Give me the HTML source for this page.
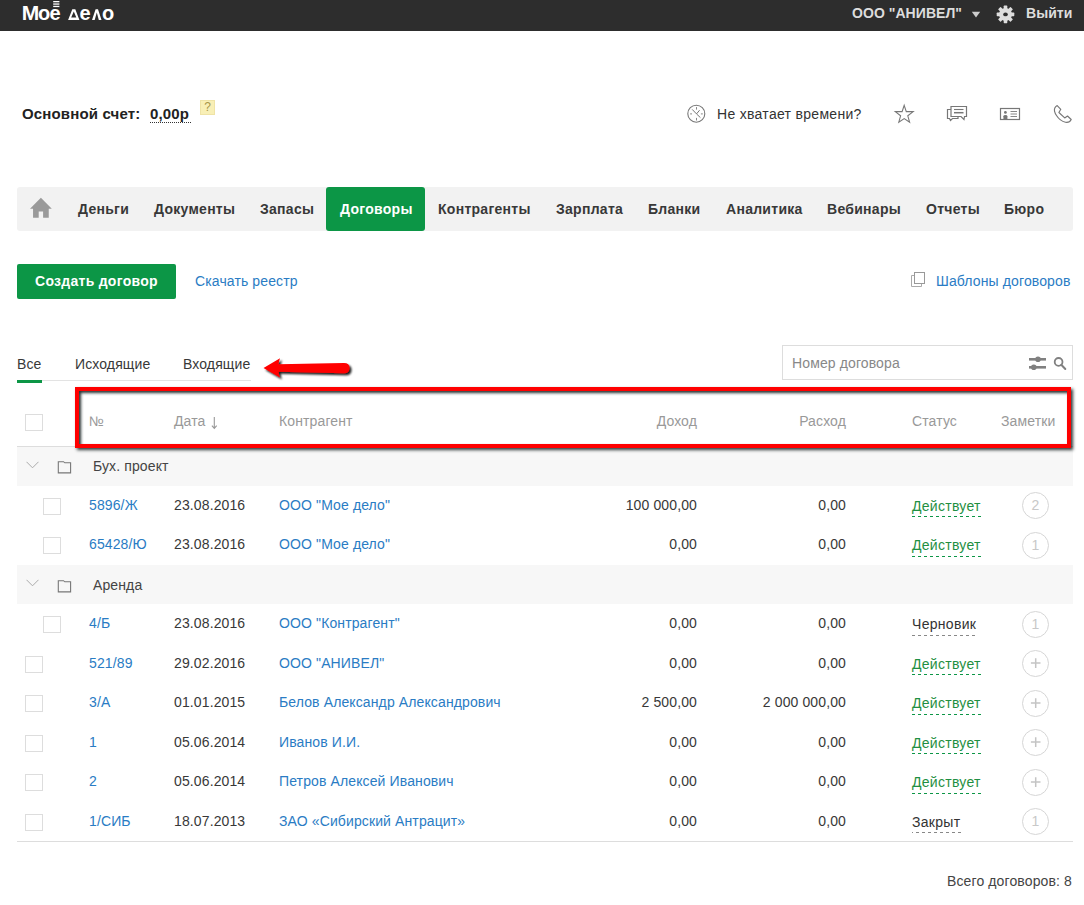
<!DOCTYPE html>
<html><head><meta charset="utf-8">
<style>
*{margin:0;padding:0;box-sizing:border-box}
html,body{width:1084px;height:905px;overflow:hidden;background:#fff}
body{position:relative;font-family:"Liberation Sans",sans-serif;font-size:14px;color:#383838}
.a{position:absolute;white-space:nowrap;line-height:16px;letter-spacing:0.12px}
.b{font-weight:bold;letter-spacing:0.28px}
.hdr{position:absolute;left:0;top:0;width:1084px;height:31px;background:#2d2d2d}
.nav{position:absolute;left:17px;top:187px;width:1056px;height:44px;background:#f2f2f2;border-radius:3px}
.navact{position:absolute;left:326px;top:187px;width:99px;height:44px;background:#0c9646;border-radius:3px}
.lnk{color:#2a7cc4}
.gr{color:#999}
.cb{position:absolute;width:18px;height:17px;border:1px solid #ddd;background:#fff}
.grp{position:absolute;left:17px;width:1056px;background:#f7f7f7}
.num{text-align:right}
.st{position:absolute;white-space:nowrap;line-height:16px;color:#1f8f42;letter-spacing:0.28px}
.dash{position:absolute;height:1px;background-image:linear-gradient(90deg,#0c9646 0 3px,transparent 3px 6px);background-size:6px 1px}
.dashg{position:absolute;height:1px;background-image:linear-gradient(90deg,#888 0 3px,transparent 3px 6px);background-size:6px 1px}
.circ{position:absolute;width:27px;height:27px;border:1px solid #d6d6d6;border-radius:50%;color:#c8c8c8;font-size:14px;line-height:25px;text-align:center;letter-spacing:0}
</style></head><body>

<div class="hdr"></div>
<div class="a b" style="left:21.8px;top:1px;font-size:21px;line-height:24px;color:#fff;letter-spacing:0">М</div>
<div class="a b" style="left:38px;top:2px;font-size:20px;line-height:22px;color:#fff;letter-spacing:0">о</div>
<div class="a b" style="left:49.6px;top:2px;font-size:20px;line-height:22px;color:#fff;letter-spacing:0">е</div>
<svg style="position:absolute;left:0;top:0" width="120" height="30" viewBox="0 0 120 30"><g fill="#fff"><rect x="53.2" y="1" width="6.2" height="1.3"/><rect x="53.2" y="3.4" width="6.2" height="1.3"/><rect x="53.2" y="5.8" width="6.2" height="1.3"/><path fill-rule="evenodd" d="M68.1 19.9L72.3 9.2H75.3L79.4 19.9ZM71.2 17.5H76.3L73.8 11.4Z"/><path d="M92 19.9L95.6 9.2H98L101.5 19.9H98.8L96.8 12.6L94.7 19.9Z"/></g></svg>
<div class="a b" style="left:79.6px;top:2px;font-size:20px;line-height:22px;color:#fff;letter-spacing:0">е</div>
<div class="a b" style="left:101.9px;top:2px;font-size:20px;line-height:22px;color:#fff;letter-spacing:0">о</div>
<div class="a b" style="left:852px;top:5px;color:#ddd;letter-spacing:0.05px">ООО "АНИВЕЛ"</div>
<svg style="position:absolute;left:971px;top:11px" width="10" height="8" viewBox="0 0 10 8"><path d="M0.8 0.8H9.2L5 6.6Z" fill="#ccc"/></svg>
<svg style="position:absolute;left:995px;top:4px" width="22" height="22" viewBox="995 4 22 22"><g fill="#ddd" transform="translate(1005.5 14.4)"><circle r="6.4"/><rect x="-1.8" y="-8.8" width="3.6" height="17.6" rx="0.6"/><rect x="-1.8" y="-8.8" width="3.6" height="17.6" rx="0.6" transform="rotate(45)"/><rect x="-1.8" y="-8.8" width="3.6" height="17.6" rx="0.6" transform="rotate(90)"/><rect x="-1.8" y="-8.8" width="3.6" height="17.6" rx="0.6" transform="rotate(135)"/><ellipse rx="2.3" ry="1.9" fill="#2d2d2d"/></g></svg>
<div class="a b" style="left:1026px;top:5px;color:#ddd;letter-spacing:0.05px">Выйти</div>

<div class="a b" style="left:22px;top:105px;font-size:15px;line-height:17px;color:#222;letter-spacing:0.15px">Основной счет:</div>
<div class="a b" style="left:150px;top:105px;font-size:15px;line-height:17px;color:#222;letter-spacing:0.15px">0,00р</div>
<div style="position:absolute;left:150px;top:122px;width:41px;height:1px;background-image:linear-gradient(90deg,#333 0 1px,transparent 1px 2px);background-size:2px 1px"></div>
<div style="position:absolute;left:200px;top:100px;width:15px;height:15px;background:#f8efb6;border:1px solid #efe3a6;color:#a8964a;font-size:12px;line-height:13px;text-align:center">?</div>

<svg style="position:absolute;left:684px;top:102px" width="26" height="26" viewBox="684 102 26 26"><circle cx="696.3" cy="113.7" r="8.5" fill="none" stroke="#777" stroke-width="1.1"/><path d="M692.2 109.4L696.5 113.9L699.6 110.2M696.5 113.9L700.4 117.6" fill="none" stroke="#777" stroke-width="1"/><path d="M696.5 107.1v2.5M696.5 117.9v2.6M690.1 113.9h1.9M700.9 113.9h1.9" stroke="#888" stroke-width="1"/></svg>
<div class="a" style="left:717px;top:106px;color:#333;letter-spacing:0.3px">Не хватает времени?</div>
<svg style="position:absolute;left:890px;top:100px" width="30" height="28" viewBox="890 100 30 28"><path d="M904.2 105.3L906.3 111.6L913.2 111.6L907.8 115.8L909.6 122.2L904.2 118.6L898.8 122.2L900.6 115.8L895.3 111.6L902.1 111.6Z" fill="none" stroke="#777" stroke-width="1.1" stroke-linejoin="miter"/></svg>
<svg style="position:absolute;left:946px;top:105px" width="22" height="17" viewBox="0 0 22 17"><path d="M5 1.5H20.5V11.5H18.5L18 14.5L15 11.5H5Z" fill="none" stroke="#777" stroke-width="1.2"/><path d="M8 4.5H17.5" stroke="#777" stroke-width="1.1"/><path d="M8 7.7H17.5" stroke="#777" stroke-width="1.5"/><path d="M5 4.5H1.5V13.5H3.5L4.5 15.5L6.5 13.5H12V11.5" fill="none" stroke="#777" stroke-width="1.2"/></svg>
<svg style="position:absolute;left:999px;top:107px" width="22" height="14" viewBox="0 0 22 14"><rect x="1.5" y="1.5" width="19" height="11" fill="none" stroke="#777" stroke-width="1.2"/><circle cx="6.4" cy="5.4" r="1.4" fill="#777"/><path d="M4.4 12.5V9.2Q4.4 8 6.4 8Q8.4 8 8.4 9.2V12.5Z" fill="#777"/><path d="M11.5 4.5H18M11.5 7H18M11.5 9.5H18" stroke="#888" stroke-width="1"/></svg>
<svg style="position:absolute;left:1050px;top:100px" width="28" height="26" viewBox="1050 100 28 26"><path d="M1057.2 105.6L1060.8 109.3L1058.9 112.5L1064.7 117.9L1067.5 116L1071.2 119.5Q1069.5 123 1065.5 122.3Q1060 121 1056.5 115.5Q1053.5 111 1054.8 108Q1055.5 106.5 1057.2 105.6Z" fill="none" stroke="#777" stroke-width="1.15" stroke-linejoin="round"/></svg>

<div class="nav"></div>
<div class="navact"></div>
<svg style="position:absolute;left:26px;top:193px" width="30" height="29" viewBox="26 193 30 29"><path d="M40.9 197.8L51.8 208.7H48.75V217.8H43.1V211.6H38.7V217.8H33.05V208.7H30Z" fill="#9a9a9a"/></svg>
<div class="a b" style="left:78px;top:201px">Деньги</div>
<div class="a b" style="left:154px;top:201px">Документы</div>
<div class="a b" style="left:260px;top:201px">Запасы</div>
<div class="a b" style="left:340px;top:201px;color:#fff">Договоры</div>
<div class="a b" style="left:438px;top:201px">Контрагенты</div>
<div class="a b" style="left:556px;top:201px">Зарплата</div>
<div class="a b" style="left:648px;top:201px">Бланки</div>
<div class="a b" style="left:726px;top:201px">Аналитика</div>
<div class="a b" style="left:827px;top:201px">Вебинары</div>
<div class="a b" style="left:926px;top:201px">Отчеты</div>
<div class="a b" style="left:1004px;top:201px">Бюро</div>

<div style="position:absolute;left:17px;top:264px;width:159px;height:35px;background:#0c9646;border-radius:2px"></div>
<div class="a b" style="left:35px;top:273px;color:#fff">Создать договор</div>
<div class="a lnk" style="left:195px;top:273px">Скачать реестр</div>
<svg style="position:absolute;left:911px;top:272px" width="15" height="16" viewBox="0 0 15 16"><path d="M3.5 3.5H0.5V14.5H10.5V11.5" fill="none" stroke="#aaa" stroke-width="1"/><rect x="3.5" y="0.5" width="10" height="11" fill="#fff" stroke="#999" stroke-width="1"/></svg>
<div class="a lnk" style="left:936px;top:273px">Шаблоны договоров</div>

<div class="a" style="left:17px;top:356px">Все</div>
<div class="a" style="left:75px;top:356px">Исходящие</div>
<div class="a" style="left:183px;top:356px">Входящие</div>
<div style="position:absolute;left:17px;top:380px;width:234px;height:1px;background:#e3e3e3"></div>
<div style="position:absolute;left:17px;top:380px;width:25px;height:3px;background:#0c9646"></div>

<div style="position:absolute;left:782px;top:345px;width:291px;height:35px;border:1px solid #ddd"></div>
<div class="a" style="left:792px;top:355px;color:#888">Номер договора</div>
<svg style="position:absolute;left:1028px;top:356px" width="19" height="15" viewBox="0 0 19 15"><g fill="#808080"><rect x="1" y="2" width="17" height="2.6"/><rect x="1" y="10" width="17" height="2.6"/><circle cx="10" cy="3.3" r="2.8"/><circle cx="5.8" cy="11.3" r="2.8"/></g></svg>
<svg style="position:absolute;left:1052px;top:355px" width="16" height="16" viewBox="0 0 16 16"><circle cx="6.6" cy="6.9" r="3.9" fill="none" stroke="#808080" stroke-width="1.8"/><path d="M9.3 9.8L13.3 14" stroke="#808080" stroke-width="2" stroke-linecap="round"/></svg>

<!-- table header -->
<div class="cb" style="left:25px;top:414px"></div>
<div class="a gr" style="left:89px;top:413px">№</div>
<div class="a gr" style="left:174px;top:413px">Дата</div>
<svg style="position:absolute;left:210px;top:415px" width="9" height="16" viewBox="210 415 9 16"><path d="M214.3 417V428.3M211.9 425.6L214.3 428.4L216.7 425.6" fill="none" stroke="#999" stroke-width="1.1"/></svg>
<div class="a gr" style="left:279px;top:413px">Контрагент</div>
<div class="a gr num" style="left:597px;top:413px;width:100px">Доход</div>
<div class="a gr num" style="left:746px;top:413px;width:100px">Расход</div>
<div class="a gr" style="left:912px;top:413px">Статус</div>
<div class="a gr" style="left:1001px;top:413px">Заметки</div>
<div style="position:absolute;left:17px;top:446px;width:1056px;height:1px;background:#ddd"></div>

<!-- rows -->
<!--ROWS-->
<div class="grp" style="top:447px;height:39px"></div>
<svg style="position:absolute;left:25.6px;top:460.5px" width="13" height="8" viewBox="0 0 13 8"><path d="M0.5 0.8L6.5 6.8L12.5 0.8" fill="none" stroke="#aaa" stroke-width="1"/></svg>
<svg style="position:absolute;left:57px;top:460.0px" width="15" height="14" viewBox="0 0 15 14"><path d="M1.3 1.7H6.5L7.8 2.8H13.6V12.9H1.3Z" fill="none" stroke="#777" stroke-width="1.1"/></svg>
<div class="a" style="left:93px;top:458.2px;color:#444">Бух. проект</div>
<div class="cb" style="left:43px;top:497.8px"></div>
<div class="a lnk" style="left:89px;top:496.5px">5896/Ж</div>
<div class="a" style="left:174px;top:496.5px">23.08.2016</div>
<div class="a lnk" style="left:279px;top:496.5px">ООО "Мое дело"</div>
<div class="a num" style="left:497px;top:496.5px;width:200px">100 000,00</div>
<div class="a num" style="left:646px;top:496.5px;width:200px">0,00</div>
<div class="st" style="left:912px;top:497.5px">Действует</div>
<div class="dash" style="left:912px;top:516.0px;width:69px"></div>
<div class="circ" style="left:1022px;top:492.1px">2</div>
<div class="cb" style="left:43px;top:537.3px"></div>
<div class="a lnk" style="left:89px;top:536.0px">65428/Ю</div>
<div class="a" style="left:174px;top:536.0px">23.08.2016</div>
<div class="a lnk" style="left:279px;top:536.0px">ООО "Мое дело"</div>
<div class="a num" style="left:497px;top:536.0px;width:200px">0,00</div>
<div class="a num" style="left:646px;top:536.0px;width:200px">0,00</div>
<div class="st" style="left:912px;top:537.0px">Действует</div>
<div class="dash" style="left:912px;top:555.5px;width:69px"></div>
<div class="circ" style="left:1022px;top:531.6px">1</div>
<div class="grp" style="top:565px;height:39px"></div>
<svg style="position:absolute;left:25.6px;top:579.0px" width="13" height="8" viewBox="0 0 13 8"><path d="M0.5 0.8L6.5 6.8L12.5 0.8" fill="none" stroke="#aaa" stroke-width="1"/></svg>
<svg style="position:absolute;left:57px;top:578.5px" width="15" height="14" viewBox="0 0 15 14"><path d="M1.3 1.7H6.5L7.8 2.8H13.6V12.9H1.3Z" fill="none" stroke="#777" stroke-width="1.1"/></svg>
<div class="a" style="left:93px;top:576.7px;color:#444">Аренда</div>
<div class="cb" style="left:43px;top:616.3px"></div>
<div class="a lnk" style="left:89px;top:615.0px">4/Б</div>
<div class="a" style="left:174px;top:615.0px">23.08.2016</div>
<div class="a lnk" style="left:279px;top:615.0px">ООО "Контрагент"</div>
<div class="a num" style="left:497px;top:615.0px;width:200px">0,00</div>
<div class="a num" style="left:646px;top:615.0px;width:200px">0,00</div>
<div class="a" style="left:912px;top:616.0px;color:#333;letter-spacing:0.3px">Черновик</div>
<div class="dashg" style="left:912px;top:634.5px;width:64px;background-position:0px 0"></div>
<div class="circ" style="left:1022px;top:610.6px">1</div>
<div class="cb" style="left:25px;top:655.8px"></div>
<div class="a lnk" style="left:89px;top:654.5px">521/89</div>
<div class="a" style="left:174px;top:654.5px">29.02.2016</div>
<div class="a lnk" style="left:279px;top:654.5px">ООО "АНИВЕЛ"</div>
<div class="a num" style="left:497px;top:654.5px;width:200px">0,00</div>
<div class="a num" style="left:646px;top:654.5px;width:200px">0,00</div>
<div class="st" style="left:912px;top:655.5px">Действует</div>
<div class="dash" style="left:912px;top:674.0px;width:69px"></div>
<div class="circ" style="left:1022px;top:650.1px"><svg width="25" height="25" viewBox="0 0 25 25" style="position:absolute;left:0;top:0"><path d="M12.7 7.3V16.9M7.9 12.1H17.5" stroke="#c4c4c4" stroke-width="1.5"/></svg></div>
<div class="cb" style="left:25px;top:695.3px"></div>
<div class="a lnk" style="left:89px;top:694.0px">3/А</div>
<div class="a" style="left:174px;top:694.0px">01.01.2015</div>
<div class="a lnk" style="left:279px;top:694.0px">Белов Александр Александрович</div>
<div class="a num" style="left:497px;top:694.0px;width:200px">2 500,00</div>
<div class="a num" style="left:646px;top:694.0px;width:200px">2 000 000,00</div>
<div class="st" style="left:912px;top:695.0px">Действует</div>
<div class="dash" style="left:912px;top:713.5px;width:69px"></div>
<div class="circ" style="left:1022px;top:689.6px"><svg width="25" height="25" viewBox="0 0 25 25" style="position:absolute;left:0;top:0"><path d="M12.7 7.3V16.9M7.9 12.1H17.5" stroke="#c4c4c4" stroke-width="1.5"/></svg></div>
<div class="cb" style="left:25px;top:734.8px"></div>
<div class="a lnk" style="left:89px;top:733.5px">1</div>
<div class="a" style="left:174px;top:733.5px">05.06.2014</div>
<div class="a lnk" style="left:279px;top:733.5px">Иванов И.И.</div>
<div class="a num" style="left:497px;top:733.5px;width:200px">0,00</div>
<div class="a num" style="left:646px;top:733.5px;width:200px">0,00</div>
<div class="st" style="left:912px;top:734.5px">Действует</div>
<div class="dash" style="left:912px;top:753.0px;width:69px"></div>
<div class="circ" style="left:1022px;top:729.1px"><svg width="25" height="25" viewBox="0 0 25 25" style="position:absolute;left:0;top:0"><path d="M12.7 7.3V16.9M7.9 12.1H17.5" stroke="#c4c4c4" stroke-width="1.5"/></svg></div>
<div class="cb" style="left:25px;top:774.3px"></div>
<div class="a lnk" style="left:89px;top:773.0px">2</div>
<div class="a" style="left:174px;top:773.0px">05.06.2014</div>
<div class="a lnk" style="left:279px;top:773.0px">Петров Алексей Иванович</div>
<div class="a num" style="left:497px;top:773.0px;width:200px">0,00</div>
<div class="a num" style="left:646px;top:773.0px;width:200px">0,00</div>
<div class="st" style="left:912px;top:774.0px">Действует</div>
<div class="dash" style="left:912px;top:792.5px;width:69px"></div>
<div class="circ" style="left:1022px;top:768.6px"><svg width="25" height="25" viewBox="0 0 25 25" style="position:absolute;left:0;top:0"><path d="M12.7 7.3V16.9M7.9 12.1H17.5" stroke="#c4c4c4" stroke-width="1.5"/></svg></div>
<div class="cb" style="left:25px;top:813.8px"></div>
<div class="a lnk" style="left:89px;top:812.5px">1/СИБ</div>
<div class="a" style="left:174px;top:812.5px">18.07.2013</div>
<div class="a lnk" style="left:279px;top:812.5px">ЗАО «Сибирский Антрацит»</div>
<div class="a num" style="left:497px;top:812.5px;width:200px">0,00</div>
<div class="a num" style="left:646px;top:812.5px;width:200px">0,00</div>
<div class="a" style="left:912px;top:813.5px;color:#333;letter-spacing:0.3px">Закрыт</div>
<div class="dashg" style="left:912px;top:832.0px;width:49px;background-position:-2px 0"></div>
<div class="circ" style="left:1022px;top:808.1px">1</div>
<!--/ROWS-->

<div style="position:absolute;left:17px;top:841px;width:1056px;height:1px;background:#ddd"></div>
<div class="a" style="left:947px;top:873px;color:#444">Всего договоров: 8</div>

<!-- red annotation box -->
<div style="position:absolute;left:75px;top:387px;width:996px;height:61px;border:4px solid #f00;box-shadow:2px 2px 3px rgba(30,40,40,.9), inset 2px 2px 3px rgba(30,40,40,.95)"></div>
<svg style="position:absolute;left:258px;top:352px" width="100" height="34" viewBox="258 352 100 34"><defs><filter id="sh" x="-20%" y="-40%" width="140%" height="180%"><feGaussianBlur in="SourceAlpha" stdDeviation="1"/><feOffset dx="2" dy="2"/><feComponentTransfer><feFuncA type="linear" slope="0.9"/></feComponentTransfer><feMerge><feMergeNode/><feMergeNode in="SourceGraphic"/></feMerge></filter></defs><path filter="url(#sh)" d="M263.5 368L280 358.2Q279 361 278.5 364.3L344 363Q349.5 363 349.5 368Q349.5 373.3 344 373.3L278.5 371.8Q279 375 280 377.6Z" fill="#f00"/></svg>
</body></html>
